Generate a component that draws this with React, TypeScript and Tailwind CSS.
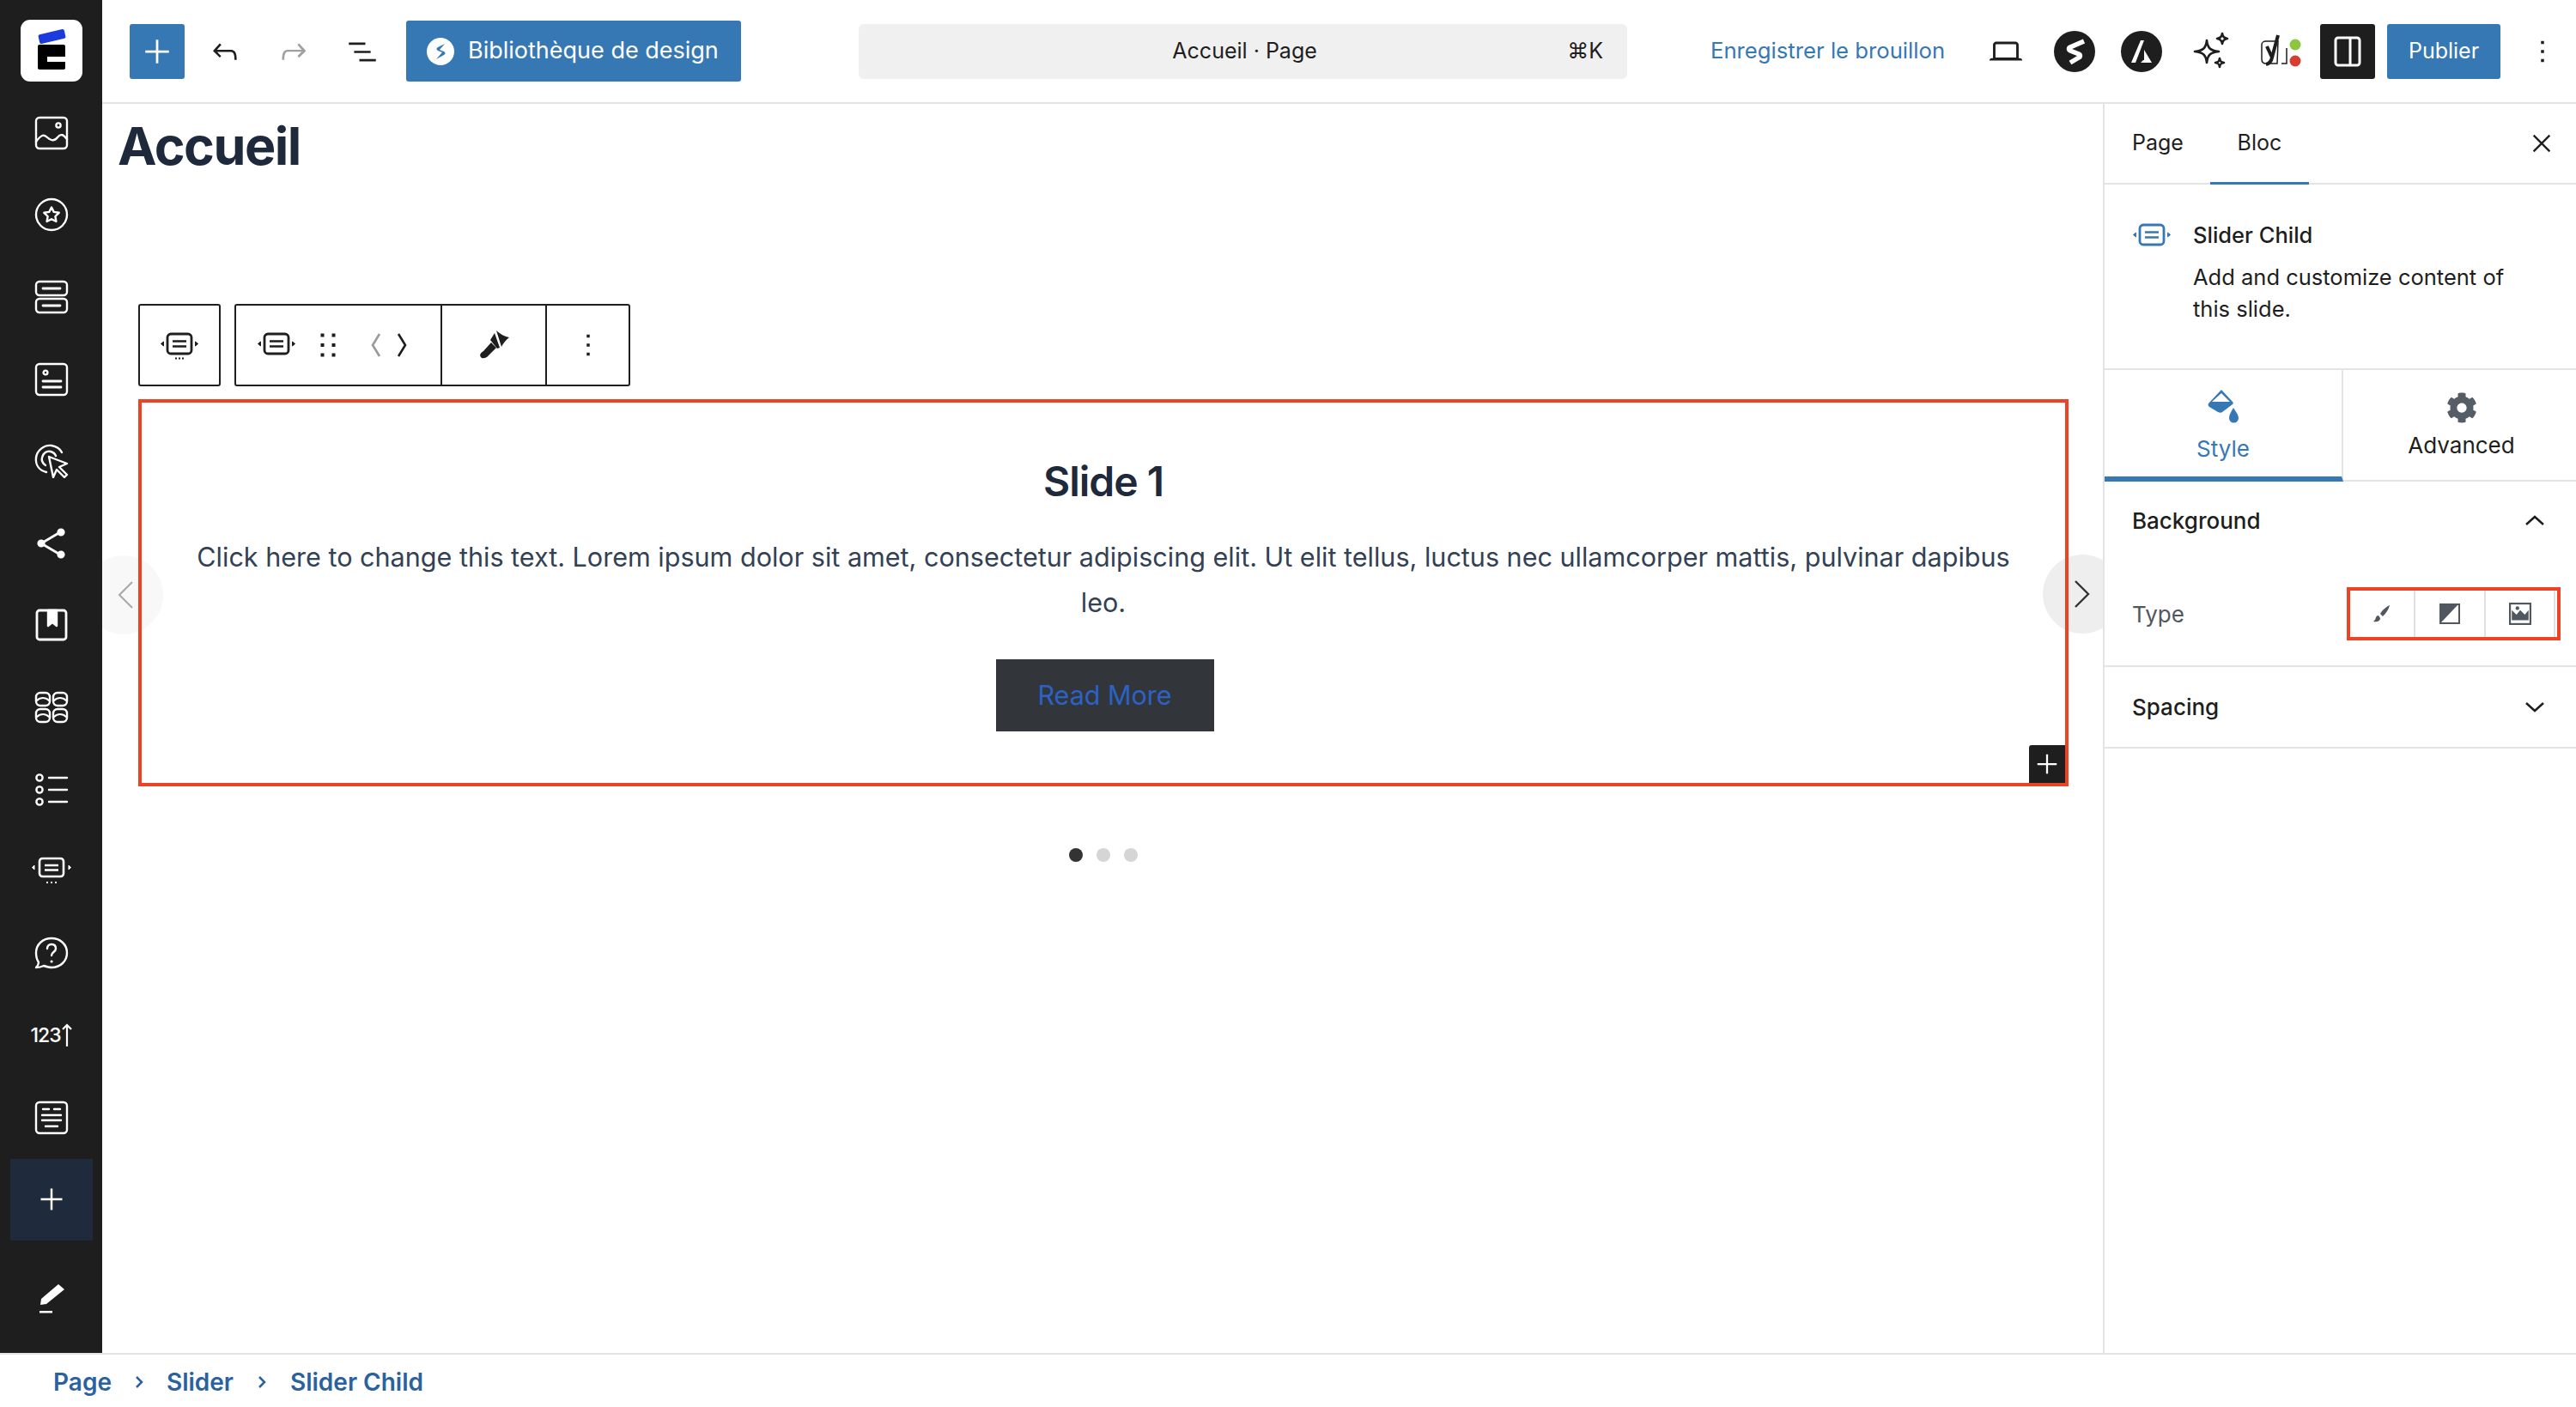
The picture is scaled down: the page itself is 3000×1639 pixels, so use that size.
import type { ReactNode } from "react";
import { FaCog } from "react-icons/fa";

const WP = ({ d, className }: { d: string; className: string }) => (
  <svg viewBox="0 0 24 24" fill="currentColor" className={className}>
    <path d={d} />
  </svg>
);

const Line = ({ size, className }: { size: string; className?: string }) => (
  <svg viewBox="0 0 24 24" className={`${size} ${className ?? ""}`} fill="none" stroke="currentColor" strokeWidth="1.5">
    <path d="M12 4.5v15M4.5 12h15" />
  </svg>
);

const undoPath =
  "M18.3 11.7c-.6-.6-1.4-.9-2.3-.9H6.7l2.9-3.3-1.1-1-4.5 5L8.5 16l1-1-2.7-2.7H16c.5 0 .9.2 1.3.5 1 1 1 3.4 1 4.5v.3h1.5v-.2c0-1.5 0-4.3-1.5-5.7z";
const redoPath =
  "M15.6 6.5l-1.1 1 2.9 3.3H8c-.9 0-1.7.3-2.3.9-1.4 1.5-1.4 4.2-1.4 5.6v.2h1.5v-.3c0-1.1 0-3.5 1-4.5.3-.3.7-.5 1.3-.5h9.2L14.5 15l1.1 1.1 4.6-4.6-4.6-5z";
const listPath = "M3 6h11v1.5H3V6Zm3.5 5.5h11V13h-11v-1.5ZM21 17H10v1.5h11V17Z";
const laptopPath =
  "M20.5 16h-.7V8c0-1.1-.9-2-2-2H6.2c-1.1 0-2 .9-2 2v8h-.7c-.8 0-1.5.7-1.5 1.5h20c0-.8-.7-1.5-1.5-1.5zM5.7 8c0-.3.2-.5.5-.5h11.6c.3 0 .5.2.5.5v7.6H5.7V8z";
const morePath = "M13 19h-2v-2h2v2zm0-6h-2v-2h2v2zm0-6h-2V5h2v2z";

const Side = ({ children }: { children: ReactNode }) => (
  <svg viewBox="0 0 40 40" fill="none" stroke="currentColor" strokeWidth="2.4" strokeLinecap="round" strokeLinejoin="round" className="size-10">
    {children}
  </svg>
);

const sideIcons: ReactNode[] = [
  <Side key="image">
    <rect x="2" y="2" width="36" height="36" rx="4" />
    <path d="M2 30c6-8 9-9 13-5s8 5 12 0 7-3 11 2" />
    <circle cx="28" cy="11" r="2.6" />
  </Side>,
  <Side key="star">
    <circle cx="20" cy="20" r="18" />
    <path d="M20 11.5l2.7 5.4 6 .9-4.3 4.2 1 6-5.4-2.8-5.4 2.8 1-6-4.3-4.2 6-.9z" />
  </Side>,
  <Side key="rows">
    <rect x="2" y="2" width="36" height="16" rx="4" />
    <rect x="2" y="22" width="36" height="16" rx="4" />
    <path d="M10 10h20M10 30h20" strokeWidth="2.8" />
  </Side>,
  <Side key="card">
    <rect x="2" y="2" width="36" height="36" rx="4" />
    <circle cx="13" cy="12" r="2.4" />
    <path d="M10 22h21M10 29h21" strokeWidth="2.8" />
  </Side>,
  <Side key="click">
    <path d="M14 33C6 31 1 25 2 16 3 8 11 1 20 2c6 1 10 4 12 8" />
    <path d="M13 25c-3-2-5-5-4-9 1-5 5-8 10-7 3 1 5 2 6 5" />
    <path d="M17 15l21 8-9 4 9 9-3 3-9-9-4 9z" />
  </Side>,
  <Side key="share">
    <path d="M30 7L8 20l22 13" strokeWidth="2.8" />
    <circle cx="31" cy="7" r="3.4" fill="currentColor" />
    <circle cx="31" cy="33" r="3.4" fill="currentColor" />
    <circle cx="8" cy="20" r="3.4" fill="currentColor" />
  </Side>,
  <Side key="box">
    <rect x="3" y="3" width="34" height="34" rx="3" strokeWidth="2.8" />
    <path d="M16 3h10v18l-5-4-5 4z" fill="currentColor" />
  </Side>,
  <Side key="grid">
    <rect x="2" y="3" width="16" height="15" rx="5" />
    <rect x="22" y="3" width="16" height="15" rx="5" />
    <rect x="2" y="22" width="16" height="15" rx="5" />
    <rect x="22" y="22" width="16" height="15" rx="5" />
    <path d="M3 12c4-4 10-4 14 0M23 12c4-4 10-4 14 0M3 31c4-4 10-4 14 0M23 31c4-4 10-4 14 0" strokeWidth="1.8" />
  </Side>,
  <Side key="list">
    <circle cx="6" cy="6" r="3.6" />
    <circle cx="6" cy="20" r="3.6" />
    <circle cx="6" cy="34" r="3.6" />
    <path d="M17 6h21M17 20h21M17 34h21" />
  </Side>,
  <svg key="slider" viewBox="0 0 46 36" fill="none" stroke="currentColor" className="h-9 w-[46px]">
    <rect x="9" y="3" width="28" height="21" rx="3.500" strokeWidth="2.600" />
    <path d="M15 11h16M15 16.500h16" strokeWidth="2.400" />
    <path d="M3 11l-2.500 2.500L3 16zM43 11l2.500 2.500L43 16z" fill="currentColor" strokeWidth="1" />
    <path d="M17 31h2M22 31h2M27 31h2" strokeWidth="2" />
  </svg>,
  <Side key="help">
    <path d="M20 2c10 0 18 7 18 17s-8 17-18 17c-3 0-6-1-9-2-2 1-5 2-9 2 2-2 3-4 3-6-2-3-3-7-3-11C2 9 10 2 20 2z" />
    <path d="M15 14c0-3 2-5 5-5s5 2 5 5c0 4-5 4-5 8" />
    <path d="M20 29h.1" strokeWidth="3" />
  </Side>,
  <div key="count" className="flex items-center text-[23px] font-medium leading-none tracking-[-1px]">
    123
    <svg viewBox="0 0 14 28" fill="none" stroke="currentColor" strokeWidth="2.2" className="h-7 w-3.5">
      <path d="M7 27V2M2 7l5-5 5 5" />
    </svg>
  </div>,
  <Side key="doc">
    <rect x="2" y="2" width="36" height="36" rx="4" />
    <path d="M10 10h7M23 10h7M9 17h22M9 23h22M13 30h14" />
  </Side>,
];

const SliderIcon = ({ className, dots }: { className: string; dots?: boolean }) => (
  <svg viewBox="0 0 44 36" fill="none" stroke="currentColor" className={className}>
    <rect x="8" y="5" width="28" height="23" rx="4" strokeWidth="2.800" />
    <path d="M14 13.500h16M14 19.500h16" strokeWidth="2.600" />
    <path d="M3.500 14L.5 16.500l3 2.500zM40.500 14l3 2.500-3 2.500z" fill="currentColor" strokeWidth="1" />
    {dots && <path d="M17 33.500h2M21 33.500h2M25 33.500h2" strokeWidth="2" />}
  </svg>
);

const Brush = () => (
  <svg viewBox="0 0 40 40" fill="currentColor" className="size-10">
    <path d="M23 3c4 4 10 7 15 8-4 3-7 7-9 11z" />
    <path d="M21 6l6 17-3 1-8-10z" />
    <path d="M17 17l6 6-9 9c-3 4-8 4-9 2-2-3 0-5 3-7z" />
  </svg>
);

export default function App() {
  return (
    <div className="flex h-[1639px] w-[3000px] flex-col overflow-hidden bg-white font-['Inter',sans-serif] text-[#1e1e1e]">
      <div className="flex min-h-0 flex-1">
        {/* left rail */}
        <aside className="flex w-[119px] shrink-0 flex-col items-center bg-[#1e1e1e] pl-[1px] pt-[23px] text-white">
          <div className="flex h-[72px] w-[72px] flex-col items-center justify-center gap-[4px] rounded-[11px] bg-white">
            <div className="h-[11px] w-[31px] -rotate-[13deg] rounded-[2px] bg-[#1b3bdc]" />
            <div className="relative h-[29px] w-[32px] rounded-[2px] bg-black">
              <div className="absolute right-0 top-[14px] h-[6px] w-[21px] bg-white" />
            </div>
          </div>
          <div className="mt-3 flex flex-col items-center">
            {sideIcons.map((icon, i) => (
              <div key={i} className="flex h-[95.6px] items-center justify-center">
                {icon}
              </div>
            ))}
          </div>
          <div className="flex h-[95px] w-[96px] items-center justify-center bg-[#1f2a3c]">
            <Line size="size-10" />
          </div>
          <svg viewBox="0 0 40 40" fill="currentColor" className="mt-[48px] size-10">
            <path d="M28 3l7 6-21 17-7 1 1-7zM6 34h15v2.500H6z" />
          </svg>
        </aside>

        <div className="flex min-w-0 flex-1 flex-col">
          {/* top bar */}
          <header className="flex h-[121px] shrink-0 items-center border-b-2 border-[#e4e4e4]">
            <button className="ml-[32px] flex h-[64px] w-[64px] items-center justify-center rounded-[3px] bg-[#3678b4] text-white">
              <Line size="size-11" />
            </button>
            <WP d={undoPath} className="ml-[26px] size-[42px]" />
            <WP d={redoPath} className="ml-[38px] size-[42px] text-[#a0a0a0]" />
            <WP d={listPath} className="ml-[38px] size-[42px]" />
            <button className="ml-[30px] flex h-[71px] w-[390px] items-center gap-[16px] rounded-[3px] bg-[#3678b4] pl-[24px] text-[27px] text-white">
              <svg viewBox="0 0 32 32" className="size-8">
                <circle cx="16" cy="16" r="16" fill="#fff" />
                <path d="M21 7l-8 4c-2 1-2 3 0 4l5 2-7 8 9-5c2-1 2-3 0-4l-5-2z" fill="#3678b4" />
              </svg>
              Bibliothèque de design
            </button>
            <div className="ml-[137px] flex h-[64px] w-[895px] items-center rounded-[6px] bg-[#f0f0f0] pr-[28px] text-[25px]">
              <span className="flex-1 pl-[74px] text-center">Accueil · Page</span>
              <span>⌘K</span>
            </div>
            <span className="ml-[97px] w-[271px] whitespace-nowrap text-[25.7px] text-[#3678b4]">Enregistrer le brouillon</span>
            <WP d={laptopPath} className="ml-[50px] size-[46px]" />
            <svg viewBox="0 0 48 48" className="ml-[33px] size-12">
              <circle cx="24" cy="24" r="24" fill="#1e1e1e" />
              <path d="M35 12L19 19c-2 1-2 3 0 4l10 4c2 1 2 3 0 4l-10 6" fill="none" stroke="#fff" strokeWidth="5.500" strokeLinejoin="round" />
            </svg>
            <svg viewBox="0 0 48 48" className="ml-[30px] size-12">
              <circle cx="24" cy="24" r="24" fill="#1e1e1e" />
              <path d="M23 11h4L17 37h-5zM27 22l9 15H23l3-3h1z" fill="#fff" />
            </svg>
            <svg viewBox="0 0 44 48" fill="none" stroke="#1e1e1e" strokeWidth="2.600" strokeLinejoin="round" className="ml-[36px] h-12 w-11">
              <path d="M16 11c1 9 4 12 14 13-10 1-13 4-14 13-1-9-4-12-14-13 10-1 13-4 14-13z" />
              <path d="M34 3c.5 4 2 5.500 6 6-4 .5-5.500 2-6 6-.5-4-2-5.500-6-6 4-.5 5.500-2 6-6zM31 32c.5 3.500 1.500 4.500 5 5-3.500.5-4.500 1.500-5 5-.5-3.500-1.500-4.500-5-5 3.500-.5 4.500-1.500 5-5z" />
            </svg>
            <svg viewBox="0 0 50 48" className="ml-[33px] h-12 w-[50px]">
              <path d="M8 12h14l-1 26H8c-3 0-5-2-5-5V16c0-2 2-4 5-4zM26 38h6V20" fill="none" stroke="#1e1e1e" strokeWidth="1.500" />
              <path d="M9 18l6 13M22 5l-7 26c-1 5-3 7-7 8" fill="none" stroke="#1e1e1e" strokeWidth="4" />
              <circle cx="42" cy="16" r="6.500" fill="#8cc63f" />
              <circle cx="42" cy="35" r="6.500" fill="#d63e30" />
            </svg>
            <div className="ml-[21px] flex h-[64px] w-[64px] items-center justify-center rounded-[3px] bg-[#1e1e1e] text-white">
              <svg viewBox="0 0 32 36" fill="none" stroke="currentColor" strokeWidth="3" className="h-9 w-8">
                <rect x="2" y="2" width="28" height="32" rx="3" />
                <path d="M19 2v32" />
              </svg>
            </div>
            <button className="ml-[14px] flex h-[64px] w-[132px] items-center justify-center rounded-[3px] bg-[#3678b4] text-[25px] text-white">Publier</button>
            <WP d={morePath} className="ml-[28px] size-[42px]" />
          </header>

          <div className="flex min-h-0 flex-1">
            {/* canvas */}
            <main className="relative min-w-0 flex-1 overflow-hidden pl-[19px]">
              <h1 className="-ml-[1px] mt-[9px] text-[61px] font-bold leading-[80px] tracking-[-1.500px] text-[#1e293b]">Accueil</h1>
              <div className="mt-[144px] ml-[23px] flex gap-[16px]">
                <div className="flex h-[96px] w-[96px] items-center justify-center rounded-[3px] border-2 border-[#1e1e1e]">
                  <SliderIcon dots className="h-[36px] w-[44px]" />
                </div>
                <div className="flex h-[96px] w-[461px] items-stretch rounded-[3px] border-2 border-[#1e1e1e]">
                  <div className="flex w-[240px] items-center border-r-2 border-[#1e1e1e] pl-[25px]">
                    <SliderIcon className="h-[36px] w-[44px]" />
                    <svg viewBox="0 0 22 30" fill="currentColor" className="ml-[27px] h-[30px] w-[22px]">
                      <path d="M2.500 1.500h4v4h-4zM15.500 1.500h4v4h-4zM2.500 13h4v4h-4zM15.500 13h4v4h-4zM2.500 24.500h4v4h-4zM15.500 24.500h4v4h-4z" />
                    </svg>
                    <svg viewBox="0 0 44 32" fill="none" strokeWidth="2.600" className="ml-[38px] h-8 w-11">
                      <path d="M11 3L3 16l8 13" stroke="#9a9a9a" />
                      <path d="M33 3l8 13-8 13" stroke="#1e1e1e" />
                    </svg>
                  </div>
                  <div className="flex w-[122px] items-center justify-center border-r-2 border-[#1e1e1e]">
                    <Brush />
                  </div>
                  <div className="flex flex-1 items-center justify-center">
                    <WP d={morePath} className="size-[42px]" />
                  </div>
                </div>
              </div>

              {/* selected slide */}
              <section className="relative z-10 ml-[23px] mt-[15px] flex h-[451px] w-[2248px] flex-col items-center border-[4px] border-[#ee4225] px-[60px] pt-[60px] text-center">
                <h2 className="text-[48px] font-semibold leading-[64px] tracking-[-1px] text-[#1e293b]">Slide 1</h2>
                <p className="mt-[29px] text-[30.55px] leading-[53px] text-[#334155]">
                  Click here to change this text. Lorem ipsum dolor sit amet, consectetur adipiscing elit. Ut elit tellus, luctus nec ullamcorper mattis, pulvinar dapibus leo.
                </p>
                <button className="ml-[3px] mt-[40px] h-[84px] w-[254px] bg-[#32363b] text-[30.5px] text-[#2b62c4]">Read More</button>
                <div className="absolute bottom-0 right-0 flex h-[44px] w-[42px] items-center justify-center rounded-tl-[3px] bg-[#1e1e1e] text-white">
                  <Line size="size-9" />
                </div>
              </section>

              <div className="ml-[23px] mt-[72px] flex w-[2248px] justify-center gap-[16px]">
                <span className="size-4 rounded-full bg-[#333]" />
                <span className="size-4 rounded-full bg-[#d5d5d5]" />
                <span className="size-4 rounded-full bg-[#d5d5d5]" />
              </div>

              <div className="absolute left-[-21px] top-[526px] flex size-[92px] items-center justify-center rounded-full bg-[#f8f8f8]">
                <svg viewBox="0 0 20 34" fill="none" stroke="#a8a8a8" strokeWidth="2" className="ml-[4px] h-[34px] w-5">
                  <path d="M18 2L3 17l15 15" />
                </svg>
              </div>
              <div className="absolute left-[2260px] top-[525px] flex size-[92px] items-center justify-center rounded-full bg-[#eeeeee]">
                <svg viewBox="0 0 20 34" fill="none" stroke="#333" strokeWidth="2.400" className="h-[34px] w-5">
                  <path d="M2 2l15 15L2 32" />
                </svg>
              </div>
            </main>

            {/* settings panel */}
            <aside className="relative z-20 w-[551px] shrink-0 border-l-2 border-[#e4e4e4] bg-white">
              <div className="flex h-[94px] items-center border-b-2 border-[#e4e4e4] text-[25px]">
                <span className="ml-[32px]">Page</span>
                <div className="relative ml-[31px] flex h-full w-[115px] items-center justify-center">
                  Bloc
                  <div className="absolute bottom-[-2px] left-0 right-0 h-[3px] bg-[#3678b4]" />
                </div>
                <svg viewBox="0 0 24 24" fill="none" stroke="currentColor" strokeWidth="2" className="ml-auto mr-[26px] size-7">
                  <path d="M4 4l16 16M20 4L4 20" />
                </svg>
              </div>

              <div className="flex h-[214px] pl-[32px] pt-[42px]">
                <SliderIcon className="h-[36px] w-[46px] text-[#3678b4]" />
                <div className="ml-[25px] w-[400px] text-[25.5px] leading-[37px]">
                  <div className="-mt-[2px] font-medium">Slider Child</div>
                  <p className="mt-[12px]">Add and customize content of this slide.</p>
                </div>
              </div>

              <div className="flex h-[132px] border-t-2 border-[#e4e4e4]">
                <div className="flex w-[278px] flex-col items-center border-b-[6px] border-r-2 border-b-[#3678b4] border-r-[#e4e4e4] pt-[22px] text-[#3678b4]">
                  <svg viewBox="0 0 36 44" fill="currentColor" className="h-[44px] w-[36px]">
                    <path d="M16 1L1 17c-1 2 0 3 1 4l10 6c2 1 4 1 5 0l12-9c1-1 1-2 0-3zM16 5l10 10H5z" fillRule="evenodd" />
                    <path d="M30 22c-3 5-5 8-5 12a5.500 5.500 0 0 0 11 0c0-4-3-7-6-12z" />
                  </svg>
                  <span className="mt-[6px] text-[26px]">Style</span>
                </div>
                <div className="flex flex-1 flex-col items-center border-b-2 border-[#e4e4e4] pl-[4px] pt-[26px]">
                  <FaCog className="size-[36px] text-[#555d66]" />
                  <span className="mt-[6px] text-[26px]">Advanced</span>
                </div>
              </div>

              <div className="flex h-[216px] flex-col border-b-2 border-[#e4e4e4]">
                <div className="-mt-[4px] flex h-[98px] items-center justify-between pl-[32px] pr-[36px] text-[26px] font-medium">
                  Background
                  <svg viewBox="0 0 24 14" fill="none" stroke="currentColor" strokeWidth="2.500" className="h-[14px] w-6"><path d="M2 12L12 3l10 9" /></svg>
                </div>
                <div className="mt-[29px] flex items-center justify-between pl-[32px] pr-[18px]">
                  <span className="text-[26px] text-[#50575e]">Type</span>
                  <div className="flex h-[62px] w-[249px] items-stretch border-[4px] border-[#ee4225]">
                    <div className="flex w-[76px] items-center justify-center border-r-2 border-[#e0e0e0]">
                      <svg viewBox="0 0 24 24" fill="#50575e" className="size-6"><path d="M21 2c-4 2-9 6-11 10l3 3c3-3 7-8 8-13zM8 14c-3 0-3 3-4 5l-2 2c3 1 8 0 8-4z" /></svg>
                    </div>
                    <div className="flex w-[82px] items-center justify-center border-r-2 border-[#e0e0e0]">
                      <svg viewBox="0 0 24 24" className="size-[24px]"><rect x="1" y="1" width="22" height="22" fill="#fff" stroke="#50575e" strokeWidth="2" /><path d="M2 2h19L2 22z" fill="#50575e" /></svg>
                    </div>
                    <div className="flex w-[81px] items-center justify-center border-r-2 border-[#e0e0e0]">
                      <svg viewBox="0 0 24 24" className="size-[26px]"><rect x="1" y="1" width="22" height="22" fill="#fff" stroke="#50575e" strokeWidth="2" /><path d="M3 19V8l5 5 4-5 5 5 4-5v11z" fill="#50575e" /><circle cx="9" cy="6" r="2" fill="#50575e" /></svg>
                    </div>
                  </div>
                </div>
              </div>

              <div className="flex h-[95px] items-center justify-between border-b-2 border-[#e4e4e4] pl-[32px] pr-[36px] text-[26px] font-medium">
                Spacing
                <svg viewBox="0 0 24 14" fill="none" stroke="currentColor" strokeWidth="2.500" className="h-[14px] w-6"><path d="M2 2l10 9 10-9" /></svg>
              </div>
            </aside>
          </div>
        </div>
      </div>

      {/* breadcrumb */}
      <footer className="flex h-[63px] shrink-0 items-center border-t-2 border-[#e4e4e4] pl-[62px] pt-[2px] text-[28px] font-semibold text-[#2a629f]">
        <span>Page</span>
        <svg viewBox="0 0 12 16" fill="none" stroke="currentColor" strokeWidth="2.500" className="mx-[26px] h-4 w-3"><path d="M3 2l6 6-6 6" /></svg>
        <span>Slider</span>
        <svg viewBox="0 0 12 16" fill="none" stroke="currentColor" strokeWidth="2.500" className="mx-[27px] h-4 w-3"><path d="M3 2l6 6-6 6" /></svg>
        <span>Slider Child</span>
      </footer>
    </div>
  );
}
